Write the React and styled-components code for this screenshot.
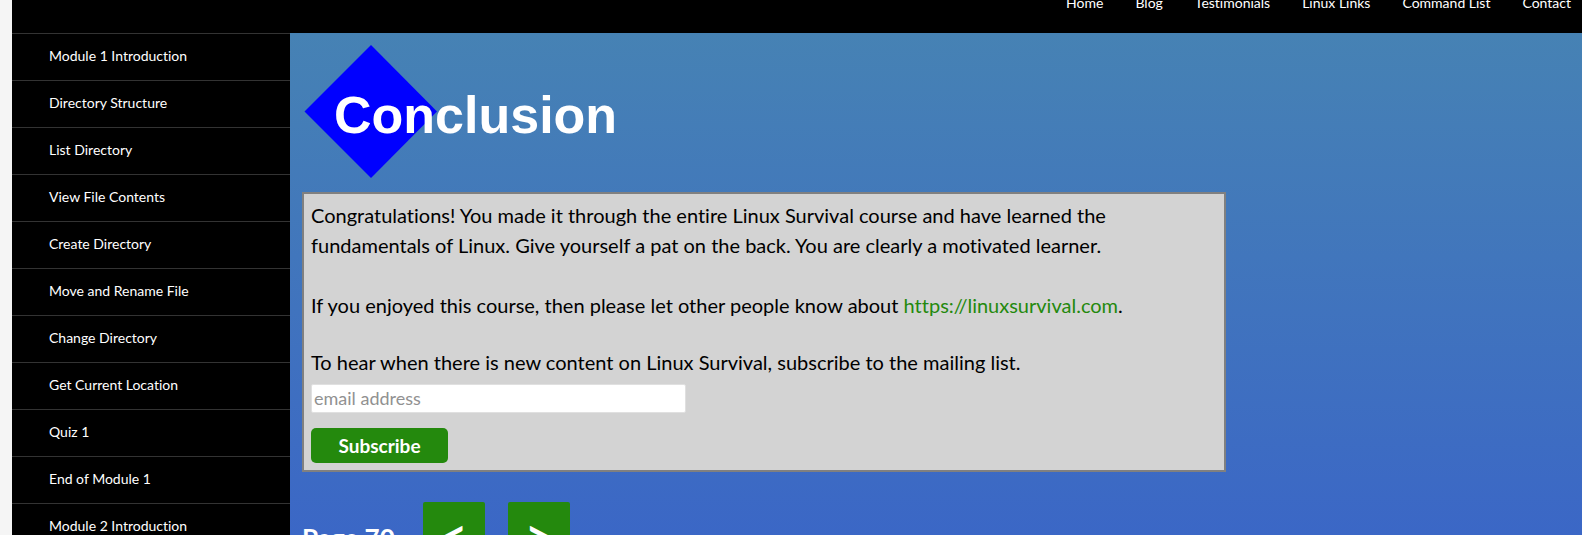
import React from "react";
import styled, { createGlobalStyle } from "styled-components";

const GlobalStyle = createGlobalStyle`
  *, *::before, *::after { box-sizing: border-box; }
  html, body { margin: 0; }
  body {
    background: #f5f5f5;
    font-family: Lato, "Liberation Sans", sans-serif;
    font-size: 20px;
    font-variant-ligatures: none;
    line-height: 30px;
    color: #000;
  }
`;

const Site = styled.div`
  display: flex;
  flex-direction: column;
  height: 100vh;
  padding-left: 12px;
  overflow: hidden;
`;

const Header = styled.header`
  flex: none;
  background: #000;
  padding: 0 11px 18px;
`;

const TopNav = styled.nav`
  display: flex;
  justify-content: flex-end;
  gap: 32px;
  height: 15px;
  align-items: flex-end;
`;

const NavLink = styled.a`
  color: #fff;
  font-size: 14px;
  line-height: 24px;
  text-decoration: none;
  white-space: nowrap;
`;

const Columns = styled.div`
  display: flex;
  flex: 1;
  min-height: 0;
`;

const Sidebar = styled.nav`
  flex: none;
  width: 278px;
  background: #000;
  overflow: hidden;
`;

const LessonList = styled.ul`
  margin: 0;
  padding: 0;
  list-style: none;
`;

const LessonItem = styled.li`
  border-top: 1px solid #333;
`;

const LessonLink = styled(NavLink)`
  display: block;
  padding: 10px 37px 12px;
`;

const Main = styled.main`
  flex: 1;
  min-width: 0;
  padding: 12px;
  overflow: hidden;
  background: linear-gradient(#4682b4, #3b67c6);
`;

const Banner = styled.div`
  display: grid;
  align-items: center;
  height: 134px;
  margin: 0 0 13px 2px;

  > * { grid-area: 1 / 1; }
`;

const Diamond = styled.svg`
  display: block;
  width: 134px;
  height: 134px;
`;

const Title = styled.h1`
  z-index: 1;
  margin: 0;
  padding: 5px 0 0 30px;
  color: #fff;
  font: bold 52px/60px "Liberation Sans", Arial, sans-serif;
`;

const Card = styled.section`
  max-width: 924px;
  padding: 6px 7px 7px;
  background: #d3d3d3;
  border: 2px solid #808080;
`;

const Paragraph = styled.p`
  margin: 0 0 30px;

  & + form { margin-top: -3px; }
`;

const SiteLink = styled.a`
  color: #24890d;
  text-decoration: none;
`;

const Form = styled.form`
  display: flex;
  flex-direction: column;
  align-items: flex-start;
`;

const EmailInput = styled.input`
  width: 375px;
  max-width: 100%;
  height: 29px;
  margin: 7px 0 15px;
  padding: 1px 2px 3px;
  border: 1px solid #e0e0e0;
  border-radius: 2px;
  background: #fff;
  font: 18px/24px Lato, sans-serif;

  &::placeholder { color: #919191; opacity: 1; }
`;

const SubscribeButton = styled.button`
  width: 137px;
  height: 35px;
  padding: 0;
  border: 0;
  border-radius: 5px;
  background: #24890d;
  color: #fff;
  font: bold 19px/24px Lato, sans-serif;
`;

const Pager = styled.div`
  display: flex;
  align-items: center;
  gap: 23px;
  margin-top: 30px;
`;

const PageLabel = styled.span`
  margin-right: 5px;
  color: #fff;
  font-size: 26px;
  font-weight: bold;
`;

const PageButton = styled.button`
  width: 62px;
  height: 72px;
  padding: 0 0 6px;
  border: 0;
  border-radius: 2px;
  background: #24890d;
  color: #fff;
  font: bold 48px/48px Lato, sans-serif;
`;

const links = ["Home", "Blog", "Testimonials", "Linux Links", "Command List", "Contact"];

const lessons = [
  "Module 1 Introduction",
  "Directory Structure",
  "List Directory",
  "View File Contents",
  "Create Directory",
  "Move and Rename File",
  "Change Directory",
  "Get Current Location",
  "Quiz 1",
  "End of Module 1",
  "Module 2 Introduction",
];

export default function App() {
  return (
    <Site>
      <GlobalStyle />
      <Header>
        <TopNav aria-label="Main">
          {links.map((label) => (
            <NavLink href="#" key={label}>{label}</NavLink>
          ))}
        </TopNav>
      </Header>
      <Columns>
        <Sidebar aria-label="Lessons">
          <LessonList>
            {lessons.map((label) => (
              <LessonItem key={label}>
                <LessonLink href="#">{label}</LessonLink>
              </LessonItem>
            ))}
          </LessonList>
        </Sidebar>
        <Main>
          <Banner>
            <Diamond viewBox="0 0 134 134" aria-hidden="true">
              <path d="M67 0 133 66.500 67 133 .5 66.500Z" fill="#00f" />
            </Diamond>
            <Title>Conclusion</Title>
          </Banner>
          <Card>
            <Paragraph>
              Congratulations! You made it through the entire Linux Survival course and have learned the
              fundamentals of Linux. Give yourself a pat on the back. You are clearly a motivated learner.
            </Paragraph>
            <Paragraph>
              If you enjoyed this course, then please let other people know about{" "}
              <SiteLink href="#">https://linuxsurvival.com</SiteLink>.
            </Paragraph>
            <Form>
              <label htmlFor="email">
                To hear when there is new content on Linux Survival, subscribe to the mailing list.
              </label>
              <EmailInput id="email" type="email" placeholder="email address" />
              <SubscribeButton type="button">Subscribe</SubscribeButton>
            </Form>
          </Card>
          <Pager>
            <PageLabel>Page 70</PageLabel>
            <PageButton type="button" aria-label="Previous page">&lt;</PageButton>
            <PageButton type="button" aria-label="Next page">&gt;</PageButton>
          </Pager>
        </Main>
      </Columns>
    </Site>
  );
}
